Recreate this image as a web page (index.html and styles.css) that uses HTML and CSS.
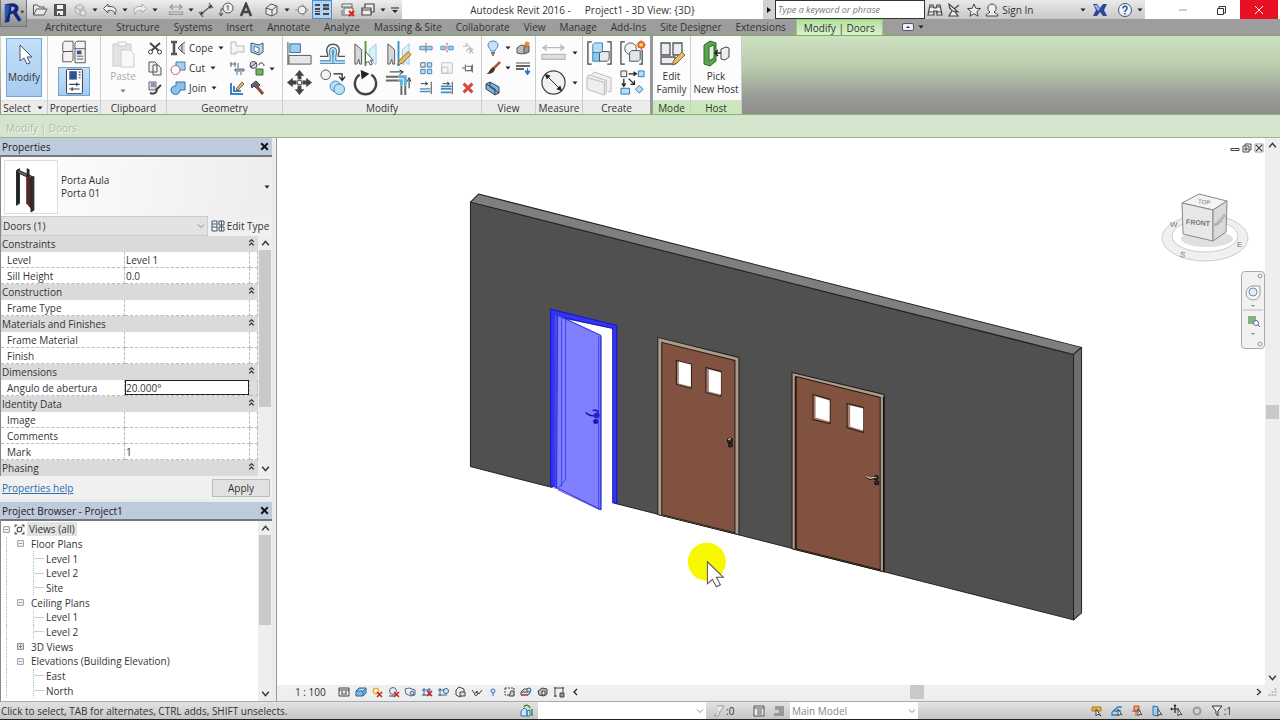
FILE: index.html
```html
<!DOCTYPE html>
<html lang="en">
<head>
<meta charset="utf-8">
<title>Autodesk Revit 2016 - Project1 - 3D View: {3D}</title>
<link rel="stylesheet" href="styles.css">
</head>
<body>
<svg class="defs" aria-hidden="true">
  <symbol id="caret" viewBox="0 0 8 8"><path d="M1.5 2.5h5L4 5.5z" fill="#222"/></symbol>
  <symbol id="up" viewBox="0 0 10 10"><path d="M2 7l3-3.500 3 3.500" fill="none" stroke="#333" stroke-width="1.300"/></symbol>
  <symbol id="down" viewBox="0 0 10 10"><path d="M2 3l3 3.500 3-3.500" fill="none" stroke="#333" stroke-width="1.300"/></symbol>
  <symbol id="x" viewBox="0 0 10 10"><path d="M2 2l6 6M8 2l-6 6" stroke="#111" stroke-width="1.800"/></symbol>
  <symbol id="fold" viewBox="0 0 8 8"><path d="M2 3.500l2-2 2 2M2 6.500l2-2 2 2" fill="none" stroke="#222"/></symbol>
  <symbol id="minus" viewBox="0 0 8 8"><path d="M1.500 1.500h5v5h-5zM2.500 4h3" fill="#fff" stroke="#888" stroke-width=".8"/></symbol>
  <symbol id="plus" viewBox="0 0 8 8"><path d="M1.500 1.500h5v5h-5zM2.500 4h3M4 2.500v3" fill="#fff" stroke="#777" stroke-width=".9"/></symbol>
  <symbol id="mirror" viewBox="0 0 28 28"><path d="M3 4l7 6v15H8l-1-5-2 5H3z" fill="#d5d8da" stroke="#555"/><path d="M25 4l-7 6v15h2l1-5 2 5h2z" fill="#d9effa" stroke="#9ccbe6"/></symbol>
</svg>

<header class="title">
  <button class="logo" aria-label="Application menu"><svg viewBox="0 0 27 27"><path d="M4 4l8-1c7 0 9 6 5 10l5 8-3 2-6-9-3 1-1 8-5 1 2-10 3-8z" fill="#142779"/><path d="M11 7c5-1 5 3 0 5z" fill="#a5b4d8"/><path d="M4 4l5 2-1 8-4 9z" fill="#2c57ad"/><path d="M21 11h4l-2 3z" fill="#333"/></svg></button>
  <div class="quick">
    <button aria-label="Open"><svg viewBox="0 0 16 16"><path d="M1.500 13V3h4l1.500 2h5v2M1.500 13l3-6H15l-3 6z" fill="#e8e8e8" stroke="#555"/></svg></button>
    <button aria-label="Save"><svg viewBox="0 0 16 16"><path d="M2.500 2.500h11v11h-11z" fill="#56595f" stroke="#44474c"/><path d="M5 3h6v4H5zM5 9h6v4H5z" fill="#f4f4f4"/><path d="M6 11h2v2H6z" fill="#555"/></svg></button>
    <button aria-label="Synchronize"><svg viewBox="0 0 16 16"><path d="M3 5l5-3 4 3v5l-5 3-4-3zM3 5l5 3 4-3M8 8v5" fill="#ddd" stroke="#aaa"/><circle cx="11" cy="11" r="3" fill="#ddd" stroke="#aaa"/></svg></button>
    <svg class="c"><use href="#caret"/></svg>
    <button aria-label="Undo"><svg viewBox="0 0 16 16"><path d="M6 2L1.500 6.500 6 11V8.500c4-.5 6 0 7 4 3-6-1-8.500-7-8z" fill="#eee" stroke="#555"/></svg></button>
    <svg class="c"><use href="#caret"/></svg>
    <button aria-label="Redo"><svg viewBox="0 0 16 16"><path d="M10 2l4.500 4.500L10 11V8.500c-4-.5-6 0-7 4-3-6 1-8.500 7-8z" fill="#eee" stroke="#aaa"/></svg></button>
    <svg class="c"><use href="#caret"/></svg><i></i>
    <button aria-label="Measure"><svg viewBox="0 0 16 16"><path d="M2 5h12M5 2.500L2 5l3 2.500M11 2.500L14 5l-3 2.500M1.500 10h13v2.500h-13z" fill="none" stroke="#999" stroke-width="1.200"/></svg></button>
    <svg class="c"><use href="#caret"/></svg>
    <button aria-label="Aligned dimension"><svg viewBox="0 0 16 16"><path d="M3 12L13 4M1 10l4 5M11 1l4 5" stroke="#555" stroke-width="1.200"/><path d="M2 13l1-4 3 3zM14 3l-1 4-3-3z" fill="#444"/></svg></button>
    <button aria-label="Tag"><svg viewBox="0 0 16 16"><circle cx="10" cy="6" r="5" fill="#eee" stroke="#555"/><path d="M8.500 4.500L10 3.500v5M5 7H3v7M1 11l2 3 2-3" fill="none" stroke="#555"/></svg></button>
    <button aria-label="Text"><svg viewBox="0 0 16 16"><path d="M3 14L8 2l5 12M5 10h6" fill="none" stroke="#444" stroke-width="2.600"/></svg></button><i></i>
    <button aria-label="Default 3D view"><svg viewBox="0 0 16 16"><path d="M2 6l5-4 6 2v7l-5 3-6-2z" fill="#e8e8e8" stroke="#555"/><path d="M2 6l6 2 5-4M8 8v6" fill="none" stroke="#555"/></svg></button>
    <svg class="c"><use href="#caret"/></svg>
    <button aria-label="Section"><svg viewBox="0 0 16 16"><path d="M8 2l6 6-6 6M1 8h3" fill="none" stroke="#999"/><circle cx="8" cy="8" r="4" fill="#eee" stroke="#777"/></svg></button>
    <button class="on" aria-label="Thin lines"><svg viewBox="0 0 16 16"><path d="M1 3h5M9 3h6M1 7h5M9 7h6M1 12h5M9 12h6" stroke="#445" stroke-width="2"/><path d="M1 9.500h5M9 5h6" stroke="#445"/></svg></button><i></i>
    <button aria-label="Close hidden windows"><svg viewBox="0 0 16 16"><path d="M2 6V2h10v4M2 5h10M4 12V6h9v7H2V8" fill="#eee" stroke="#666"/><path d="M9 9l5 5M14 9l-5 5" stroke="#d22" stroke-width="2"/></svg></button>
    <button aria-label="Switch windows"><svg viewBox="0 0 16 16"><path d="M5 6V2h9v8h-3M2 6h9v7H2zM2 8h9" fill="#eee" stroke="#444" stroke-width="1.200"/></svg></button>
    <svg class="c"><use href="#caret"/></svg>
    <svg class="c2" viewBox="0 0 12 12"><path d="M2 4h8" stroke="#222"/><path d="M3 6h6L6 9z" fill="#222"/></svg>
  </div>
  <div class="caption"><span>Autodesk Revit 2016 -</span><span>Project1 - 3D View: {3D}</span></div>
  <button class="play" aria-label="Collapse search"><svg viewBox="0 0 10 18"><path d="M3 6l4 3-4 3z" fill="#111"/></svg></button>
  <input class="search" aria-label="Search help" placeholder="Type a keyword or phrase">
  <div class="info">
    <button aria-label="Search"><svg viewBox="0 0 16 16"><path d="M3 3h3l1 3h2l1-3h3l2 10h-5V9H7v4H1z" fill="#eee" stroke="#444" stroke-width="1.200"/><path d="M1.500 10H7M9 10h6M3 5h3M10 5h3" stroke="#444"/></svg></button>
    <button aria-label="Communication"><svg viewBox="0 0 16 16"><path d="M3 2c0 6 3 8 9 8zM8 7l5-4M6 9l-3 5h9l-3-4" fill="#eee" stroke="#444" stroke-width="1.200"/></svg></button>
    <button aria-label="Favorites"><svg viewBox="0 0 16 16"><path d="M8 2l1.800 4.300 4.700.3-3.600 3 1.200 4.600L8 11.700l-4.100 2.500 1.200-4.600-3.600-3 4.700-.3z" fill="#eee" stroke="#444"/></svg></button>
    <button class="sign"><svg viewBox="0 0 16 16"><path d="M2 14c0-3 3-2 4-4-4-3-2-8 2-8s6 5 2 8c1 2 4 1 4 4z" fill="#eee" stroke="#444"/></svg>Sign In</button>
    <svg class="c"><use href="#caret"/></svg>
    <button aria-label="Exchange"><svg viewBox="0 0 16 16"><path d="M1 2h4l3 4 3-4h4l-3 6 3 6h-4l-3-4-3 4H1l3-6z" fill="#2b479a"/><path d="M2 3h3l3 4-2 2z" fill="#9fb2de"/></svg></button><i></i>
    <button aria-label="Help"><svg viewBox="0 0 16 16"><circle cx="8" cy="8" r="6.500" fill="#f1f5fc" stroke="#456"/><path d="M6 6.500c0-3 4-3 4-.5C10 8 8 8 8 10M8 11v1.500" fill="none" stroke="#27539e" stroke-width="1.600"/></svg></button>
    <svg class="c"><use href="#caret"/></svg>
  </div>
  <div class="win">
    <button aria-label="Minimize"><svg viewBox="0 0 12 12"><path d="M2 6h8" stroke="#999"/></svg></button>
    <button aria-label="Restore"><svg viewBox="0 0 12 12"><path d="M2.500 4.500h6v6h-6zM4 4V2.500h6.500V9H9" fill="none" stroke="#333"/></svg></button>
    <button class="close" aria-label="Close"><svg viewBox="0 0 12 12"><path d="M2 2l8 8M10 2l-8 8" stroke="#fff"/></svg></button>
  </div>
</header>

<nav class="tabs">
  <button>Architecture</button><button>Structure</button><button>Systems</button><button>Insert</button><button>Annotate</button><button>Analyze</button><button>Massing &amp; Site</button><button>Collaborate</button><button>View</button><button>Manage</button><button>Add-Ins</button><button>Site Designer</button><button>Extensions</button><button class="active">Modify | Doors</button>
  <button class="pill" aria-label="Minimize ribbon"><svg viewBox="0 0 12 8"><rect x=".5" y=".5" width="11" height="7" rx="1.500" fill="#eef" stroke="#556"/><path d="M4 5h4L6 3z" fill="#333"/></svg><svg class="c"><use href="#caret"/></svg></button>
</nav>

<section class="ribbon">
  <div class="group select"><div class="body"><button class="tall hot"><svg viewBox="0 0 28 28"><path d="M10 4v16l4-3 3 6 3-1-3-6h5z" fill="#fff" stroke="#456"/></svg>Modify</button></div><h2>Select <svg class="c"><use href="#caret"/></svg></h2></div>

  <div class="group props"><div class="body stack">
    <button aria-label="Type properties"><svg viewBox="0 0 32 28"><g fill="#f3f3f3" stroke="#555"><path d="M4 5l2-2h9v9l-2 2H4zM17 5l2-2h9v9H17zM4 16l2-2h9v9l-2 2H4z"/><path d="M17 11h11v15H17z"/></g><path d="M19 13h5v4h-5z" fill="#34568c"/><path d="M19 19h7M19 22h7" stroke="#555"/></svg></button>
    <button class="hot" aria-label="Properties"><svg viewBox="0 0 32 28"><rect x="8" y="1" width="17" height="26" rx="1" fill="#fff" stroke="#334"/><path d="M11 3h8v9h-8z" fill="#2d568f"/><path d="M21 4h2M21 7h2M21 10h2M11 17h11M11 22h11M19 15v4M14 20v4" stroke="#345" stroke-width="1.300"/></svg></button>
  </div><h2>Properties</h2></div>

  <div class="group clip"><div class="body">
    <button class="tall off"><svg viewBox="0 0 28 28"><path d="M4 4h18v22H4z" fill="#e3e3e3" stroke="#ccc"/><path d="M9 2h8v4H9zM12 10h9l4 4v13H12z" fill="#f8f8f8" stroke="#ccc"/></svg>Paste<svg class="c"><use href="#caret"/></svg></button>
    <div class="col">
      <button aria-label="Cut to clipboard"><svg viewBox="0 0 16 16"><path d="M3 3l9 8M13 3l-9 8" stroke="#444" stroke-width="1.800"/><circle cx="3.500" cy="12" r="2" fill="#fff" stroke="#444"/><circle cx="12.500" cy="12" r="2" fill="#fff" stroke="#444"/></svg></button>
      <button aria-label="Copy"><svg viewBox="0 0 16 16"><path d="M2 2h6l2 2v8H2zM6 5h5l3 3v7H6z" fill="#f2f2f2" stroke="#555"/></svg></button>
      <button aria-label="Match type"><svg viewBox="0 0 16 16"><path d="M2 2h7v8H2z" fill="#d8deec" stroke="#667"/><path d="M4 4h4M4 6h4" stroke="#446"/><path d="M14 5l-5 5M3 13c3 1 6 1 7-3" stroke="#444" stroke-width="2" fill="none"/></svg></button>
    </div></div><h2>Clipboard</h2></div>

  <div class="group geo"><div class="body">
    <div class="col words">
      <button><svg viewBox="0 0 16 16"><path d="M1 2h6M1 14h6M4 2v12" stroke="#555" stroke-width="2.600"/><path d="M15 2l-3 2v8l3 2M12 4L8 8l4 4" fill="#cfd8e0" stroke="#555"/></svg>Cope<svg class="c"><use href="#caret"/></svg></button>
      <button><svg viewBox="0 0 16 16"><path d="M6 2h9v8H6z" fill="#a6d1ef" stroke="#3d82b8"/><circle cx="5.500" cy="10" r="4.500" fill="#fff" stroke="#a66"/></svg>Cut<svg class="c"><use href="#caret"/></svg></button>
      <button><svg viewBox="0 0 16 16"><path d="M6 2h9v8h-5c0 6-9 6-9 0 0-3 2-4 5-4z" fill="#8cc2e8" stroke="#2c73ad"/></svg>Join<svg class="c"><use href="#caret"/></svg></button>
    </div>
    <div class="col">
      <button aria-label="Wall joins"><svg viewBox="0 0 16 16"><path d="M2 2h5v4h8v6H7v2H2z" fill="#f5f5f5" stroke="#bbb"/></svg></button>
      <button aria-label="Beam joins"><svg viewBox="0 0 16 16"><path d="M2 2v5M6 2v5M1 4h6M6 9h9v2H6zM8 12v3M12 12v3M9 3v5" fill="#bcc" stroke="#567"/></svg></button>
      <button aria-label="Paint edge"><svg viewBox="0 0 16 16"><path d="M2 3v11h12M5 6v5h7" fill="none" stroke="#3c86bd" stroke-width="2"/><path d="M7 9l6-7 2 2-6 6z" fill="#eab64a" stroke="#765"/></svg></button>
    </div>
    <div class="col">
      <button aria-label="Split face"><svg viewBox="0 0 16 16"><path d="M2 3l8 2 4-2v9l-4 3-8-3z" fill="#bcd9f0" stroke="#456"/><path d="M5 6l5 2v5l-5-2z" fill="#fff" stroke="#367bb5"/></svg></button>
      <button aria-label="Paint"><svg viewBox="0 0 16 16"><circle cx="4.500" cy="5" r="3.500" fill="#dce" stroke="#444"/><path d="M2 7l5-4" stroke="#444"/><path d="M7 9h7v6H7z" fill="#75b54a" stroke="#365"/><path d="M10 5c0-3 5-3 5 1" fill="none" stroke="#333"/></svg></button>
      <button aria-label="Demolish"><svg viewBox="0 0 16 16"><path d="M2 5l5-4 4 4-4 3-2-2-2 2z" fill="#666" stroke="#444"/><path d="M8 7l6 7" stroke="#8a4c3c" stroke-width="3"/></svg></button>
    </div>
    <svg class="c"><use href="#caret"/></svg>
  </div><h2>Geometry</h2></div>

  <div class="group modify"><div class="body">
    <div class="big4">
      <button aria-label="Align"><svg viewBox="0 0 28 28"><path d="M2 2v24" stroke="#444"/><path d="M4 4h11v9H4z" fill="#9dcdec" stroke="#2e73a5"/><path d="M3 16h23v9H3z" fill="#e5e7e8" stroke="#555"/></svg></button>
      <button aria-label="Offset"><svg viewBox="0 0 28 28"><path d="M1 17h8V15c-6-14 17-14 11 0v2h7" fill="none" stroke="#555" stroke-width="1.500"/><path d="M1 23h12v-7c-4-9 7-9 3 0v7h11" fill="none" stroke="#397fae" stroke-width="4"/><path d="M1 23h12v-7c-4-9 7-9 3 0v7h11" fill="none" stroke="#b9dff5" stroke-width="2"/></svg></button>
      <button aria-label="Mirror by axis"><svg viewBox="0 0 28 28"><use href="#mirror"/><path d="M14 1v26" stroke="#5aa02c" stroke-width="2"/><path d="M14 12v12l3-2 2 4 2-1-2-4h3z" fill="#fff" stroke="#555"/></svg></button>
      <button aria-label="Mirror by drawing"><svg viewBox="0 0 28 28"><use href="#mirror"/><path d="M14 1v26" stroke="#3b94ce" stroke-width="2"/><path d="M13 26l2-5 9-9 3 3-9 9z" fill="#eebf4e" stroke="#765"/></svg></button>
      <button aria-label="Move"><svg viewBox="0 0 28 28"><path d="M14 1l5 6h-3v4h-4V7H9zM14 27l5-6h-3v-4h-4v4H9zM1 14l6-5v3h4v4H7v3zM27 14l-6-5v3h-4v4h4v3z" fill="#444"/><path d="M12 12h4v4h-4z" fill="#fff" stroke="#555"/></svg></button>
      <button aria-label="Copy element"><svg viewBox="0 0 28 28"><circle cx="7" cy="6" r="5" fill="#f3f3f3" stroke="#555"/><path d="M15 5h9v6M21 8l3 4 3-4" fill="none" stroke="#222" stroke-width="1.300"/><circle cx="17" cy="18" r="5.500" fill="#b9dff5" stroke="#3784b8"/><circle cx="21" cy="21" r="5.500" fill="#b9dff5" stroke="#3784b8"/></svg></button>
      <button aria-label="Rotate"><svg viewBox="0 0 28 28"><path d="M8 6A11 11 0 1 0 20 6" fill="none" stroke="#444" stroke-width="2.500"/><path d="M9 1l9 4-8 6z" fill="#222"/></svg></button>
      <button aria-label="Trim"><svg viewBox="0 0 28 28"><path d="M1 8h13M1 12h13M17 17v10M21 17v10" stroke="#666" stroke-width="2"/><path d="M14 8h7v9M14 12h3v5" fill="none" stroke="#59afe0" stroke-width="3"/><path d="M5 3h13M15 1l4 2-4 3M25 20v-9M23 13l2-4 2 4" fill="none" stroke="#222"/></svg></button>
    </div>
    <div class="small9">
      <button aria-label="Split"><svg viewBox="0 0 16 16"><path d="M1 6h14v4H1z" fill="#a6d1ef" stroke="#4587b5"/><path d="M8 2v12" stroke="#c33" stroke-dasharray="3 1"/></svg></button>
      <button aria-label="Split with gap"><svg viewBox="0 0 16 16"><path d="M1 6h5v4H1zM10 6h5v4h-5z" fill="#a6d1ef" stroke="#4587b5"/><path d="M8 2v12" stroke="#c33" stroke-dasharray="3 1"/></svg></button>
      <button aria-label="Unpin"><svg viewBox="0 0 16 16"><path d="M2 6h4V3l6 6H8l-2 3M9 9l5 5M14 9l-5 5" fill="none" stroke="#bbb" stroke-width="1.300"/></svg></button>
      <button aria-label="Array"><svg viewBox="0 0 16 16"><path d="M2 2h5v5H2z" fill="#eee" stroke="#555"/><path d="M9.500 2h5v5h-5zM2 9.500h5v5H2zM9.500 9.500h5v5h-5z" fill="#b8dcf3" stroke="#2f7db4"/></svg></button>
      <button aria-label="Scale"><svg viewBox="0 0 16 16"><path d="M2 2h12v12H2zM2 7h7v7H2z" fill="#f6f6f6" stroke="#bbb"/></svg></button>
      <button aria-label="Pin"><svg viewBox="0 0 16 16"><path d="M1 8h4M5 4v8M6 6h6v5H6M13 4v9" fill="none" stroke="#666" stroke-width="1.200"/></svg></button>
      <button aria-label="Trim single"><svg viewBox="0 0 16 16"><path d="M14 1v14M2 3h8M7 1l3 2-3 2" fill="none" stroke="#333"/><path d="M1 9h12M1 12h12" stroke="#438ebf" stroke-width="1.500"/></svg></button>
      <button aria-label="Trim multiple"><svg viewBox="0 0 16 16"><path d="M14 1v14M3 3h7M8 1l3 2-3 2" fill="none" stroke="#333"/><path d="M1 6h12M1 9h12M1 13h12" stroke="#438ebf" stroke-width="2"/></svg></button>
      <button aria-label="Delete"><svg viewBox="0 0 16 16"><path d="M3 3l10 10M13 3L3 13" stroke="#d9483f" stroke-width="3.500"/></svg></button>
    </div>
  </div><h2>Modify</h2></div>

  <div class="group view"><div class="body">
    <div class="view6">
      <button aria-label="Hide"><svg viewBox="0 0 16 16"><path d="M6 11c0-2-3-3-3-6s3-4 5-4 5 1 5 4-3 4-3 6z" fill="#c7e2fa" stroke="#4d84b5"/><path d="M6 13h4M7 15h2" stroke="#555" stroke-width="1.500"/></svg></button><svg class="c"><use href="#caret"/></svg>
      <button aria-label="Displace"><svg viewBox="0 0 16 16"><path d="M2 8l4-3 5 1v6l-4 2-5-1z" fill="#bbb" stroke="#555"/><path d="M9 7l5-1v6l-5 2z" fill="#999" stroke="#555"/><circle cx="12" cy="4" r="2.500" fill="#f08a35"/></svg></button>
      <button aria-label="Override"><svg viewBox="0 0 16 16"><path d="M15 2l-7 7" stroke="#a75c34" stroke-width="2.500"/><path d="M9 7l1 2c-1 4-4 5-9 5 4-1 3-6 8-7z" fill="#4a3328"/></svg></button><svg class="c"><use href="#caret"/></svg>
      <button aria-label="Linework"><svg viewBox="0 0 16 16"><path d="M1 3h14" stroke="#555"/><path d="M1 6h14M1 9h8" stroke="#333" stroke-width="1.600"/><path d="M10 11h5l-2.500 4zM12.500 8v4" stroke="#2879c2" fill="#2879c2"/></svg></button>
      <button aria-label="Selection box"><svg viewBox="0 0 16 16"><path d="M1 4l4-2 9 5v6l-4 2-9-6z" fill="#7fb3dc" stroke="#345"/><path d="M5 2v5l9 6M1 4l9 5v6" fill="none" stroke="#345"/></svg></button>
    </div></div><h2>View</h2></div>

  <div class="group measure"><div class="body two">
    <button aria-label="Measure distance"><svg viewBox="0 0 28 28"><path d="M3 8h22M7 5L3 8l4 3M21 5l4 3-4 3M2 15h24v5H2z" fill="#ddd" stroke="#bbb" stroke-width="1.300"/></svg></button><svg class="c"><use href="#caret"/></svg>
    <button aria-label="Dimension"><svg viewBox="0 0 28 28"><circle cx="14" cy="14" r="12" fill="#f2f2f2" stroke="#444" stroke-width="1.300"/><path d="M6 6l16 16" stroke="#222"/><path d="M5 5l6 2-4 4zM23 23l-6-2 4-4z" fill="#222"/></svg></button><svg class="c"><use href="#caret"/></svg>
  </div><h2>Measure</h2></div>

  <div class="group create"><div class="body two">
    <button aria-label="Create assembly"><svg viewBox="0 0 28 28"><path d="M6 2H2v23h4M22 2h4v23h-4" fill="none" stroke="#444" stroke-width="1.300"/><path d="M7 5l2-2h8v10H7z" fill="#b5dcf4" stroke="#3784b8"/><path d="M7 13h8v9H7z" fill="#8ec5e9" stroke="#3784b8"/><path d="M14 14l2-2h8v8l-2 2h-8z" fill="#e6eaee" stroke="#456"/></svg></button>
    <button aria-label="Create group"><svg viewBox="0 0 28 28"><path d="M6 2H2v23h4M24 10v15h-3" fill="none" stroke="#444" stroke-width="1.300"/><circle cx="12" cy="9" r="6" fill="#f3f3f3" stroke="#555"/><path d="M11 13l2-2h9v9l-2 2h-9z" fill="#e1e5e8" stroke="#456"/><circle cx="23" cy="5" r="3" fill="#ffd86b" stroke="#e2662b" stroke-width="2"/><path d="M23 0v2M23 8v3M18 5h2M26 5h2" stroke="#e2662b"/></svg></button>
    <button aria-label="Create parts"><svg viewBox="0 0 28 28"><path d="M6 6l2-3 18 6v14l-3 1" fill="#f1f1f1" stroke="#bbb"/><path d="M1 9l2-3 18 6v13l-2 2-18-6z" fill="#eee" stroke="#bbb"/><path d="M1 9l18 5v13M19 14l2-2" fill="none" stroke="#bbb"/></svg></button>
    <button aria-label="Create similar"><svg viewBox="0 0 28 28"><path d="M2 2h6v6H2z" fill="#eee" stroke="#444"/><path d="M20 2h6v6h-6zM2 20h9v6H2zM21 17l4 4-4 4-4-4z" fill="#b5dcf4" stroke="#2e79ae"/><path d="M10 5h8M15 3l3 2-3 2M5 10v8M3 15l2 3 2-3M10 10l6 6M16 12v4h-4" fill="none" stroke="#222" stroke-width="1.300"/></svg></button>
  </div><h2>Create</h2></div>

  <div class="group mode green"><div class="body"><button class="tall"><svg viewBox="0 0 28 28"><path d="M3 3h9v12H3zM15 3h9v12h-9zM3 17h14v7H3z" fill="#e9ecf0" stroke="#555" stroke-width="1.300"/><path d="M14 25l2-5 8-8 3 3-8 8z" fill="#eebf4e" stroke="#765"/></svg>Edit<br>Family</button></div><h2>Mode</h2></div>
  <div class="group host green"><div class="body"><button class="tall"><svg viewBox="0 0 28 28"><path d="M2 5l6-4 6 2v18l-6 5-6-2z" fill="#5ba34e" stroke="#2f6b2b"/><path d="M7 7l5-2v13l-5 3z" fill="#e0f0dc" stroke="#2f6b2b"/><path d="M13 13h6M16 10l-3 3 3 3" fill="none" stroke="#222" stroke-width="1.500"/><path d="M19 9l5-2 3 1v9l-4 3-4-1z" fill="#eee" stroke="#444"/></svg>Pick<br>New Host</button></div><h2>Host</h2></div>
</section>

<div class="options">Modify | Doors</div>

<main>
  <aside>
    <section class="panel properties">
      <h3>Properties<button aria-label="Close properties"><svg><use href="#x"/></svg></button></h3>
      <button class="type">
        <svg class="thumb" viewBox="0 0 54 54"><path d="M12 10l3-2v36l-3 2z" fill="#23261f" stroke="#23261f"/><path d="M13 9l15 7v3L13 12z" fill="#6c6a58" stroke="#222"/><path d="M22 14l7 5v33l-7-8z" fill="#55292a"/><path d="M23 8l2 1v7l-2-1zM27 17l3-1v35l-3 2z" fill="#34332a" stroke="#222"/></svg>
        <span>Porta Aula<br>Porta 01</span><svg class="c"><use href="#caret"/></svg>
      </button>
      <div class="filter"><select aria-label="Element filter"><option>Doors (1)</option></select><button><svg viewBox="0 0 14 14"><path d="M1 2h5v10H1zM8 2h5v4H8zM8 8h5v4H8zM1 5h5M1 8h5M10.500 2v10" fill="#f3f5fa" stroke="#456"/></svg>Edit Type</button></div>
      <div class="sheet">
        <table>
          <tr class="cat"><th colspan="3">Constraints<svg><use href="#fold"/></svg></th></tr>
          <tr><td>Level</td><td>Level 1</td><td></td></tr>
          <tr><td>Sill Height</td><td>0.0</td><td></td></tr>
          <tr class="cat"><th colspan="3">Construction<svg><use href="#fold"/></svg></th></tr>
          <tr><td>Frame Type</td><td></td><td></td></tr>
          <tr class="cat"><th colspan="3">Materials and Finishes<svg><use href="#fold"/></svg></th></tr>
          <tr><td>Frame Material</td><td></td><td></td></tr>
          <tr><td>Finish</td><td></td><td></td></tr>
          <tr class="cat"><th colspan="3">Dimensions<svg><use href="#fold"/></svg></th></tr>
          <tr class="edit"><td><label for="angle">Angulo de abertura</label></td><td><input id="angle" value="20.000°"></td><td></td></tr>
          <tr class="cat"><th colspan="3">Identity Data<svg><use href="#fold"/></svg></th></tr>
          <tr><td>Image</td><td></td><td></td></tr>
          <tr><td>Comments</td><td></td><td></td></tr>
          <tr><td>Mark</td><td>1</td><td></td></tr>
          <tr class="cat"><th colspan="3">Phasing<svg><use href="#fold"/></svg></th></tr>
        </table>
        <div class="scroll"><svg><use href="#up"/></svg><b class="t1"></b><svg><use href="#down"/></svg></div>
      </div>
      <div class="foot"><a href="#help">Properties help</a><button>Apply</button></div>
    </section>
    <section class="panel browser">
      <h3>Project Browser - Project1<button aria-label="Close browser"><svg><use href="#x"/></svg></button></h3>
      <div class="treebox">
        <ul class="tree">
          <li class="l0"><svg><use href="#minus"/></svg><svg class="vw" viewBox="0 0 10 10"><path d="M1 3V1h2M7 1h2v2M9 7v2H7M3 9H1V7" fill="none" stroke="#555"/><path d="M3 4l1-1h3v3L6 7H3z" fill="none" stroke="#444"/></svg><span>Views (all)</span></li>
          <li class="l1"><svg><use href="#minus"/></svg>Floor Plans</li>
          <li class="l2">Level 1</li><li class="l2">Level 2</li><li class="l2">Site</li>
          <li class="l1"><svg><use href="#minus"/></svg>Ceiling Plans</li>
          <li class="l2">Level 1</li><li class="l2">Level 2</li>
          <li class="l1"><svg><use href="#plus"/></svg>3D Views</li>
          <li class="l1"><svg><use href="#minus"/></svg>Elevations (Building Elevation)</li>
          <li class="l2">East</li><li class="l2">North</li>
        </ul>
        <div class="scroll"><svg><use href="#up"/></svg><b class="t2"></b><svg><use href="#down"/></svg></div>
      </div>
    </section>
  </aside>

  <section class="viewport">
    <div class="canvas">
      <svg class="model" viewBox="277 139 988 546" preserveAspectRatio="xMidYMid slice">
        <g stroke="#222" stroke-linejoin="round">
          <path d="M471 203L1073 355V620L471 467z" fill="#505050"/>
          <path d="M471 203l8-8 602 153-8 7z" fill="#7f7f7f"/>
          <path d="M1073 355l8-7v265l-8 7z" fill="#6f6f6f"/>
        </g>
        <path d="M557 318l58 12v174l-58-15z" fill="#fff"/>
        <path d="M553 487l60 14v8l-60-15z" fill="#fff"/>
        <path d="M551 310l66 16v178l-4-1V329l-51-11v171l-11-3z" fill="#3434ee" stroke="#1212d8"/>
        <path d="M555 316l14 5v166l-14 2z" fill="#4a4af0"/>
        <path d="M558 316l43 20v174l-44-22z" fill="#8080ff" stroke="#3030dc"/>
        <path d="M599 337v172M601.500 337v173M562 318v169M566 320v160l-7 8M558 490l42 20" fill="none" stroke="#3535db" stroke-width=".8"/>
        <path d="M586 413c3 3 5 4 9 3M593 411c3-1 5 0 6 2" fill="none" stroke="#1515b8" stroke-width="1.600"/><circle cx="597" cy="416" r="3" fill="#2222c8"/><circle cx="596" cy="422" r="2.500" fill="#1515b8"/>
        <g stroke="#241b17">
          <path d="M658 338l81 20v177l-81-20z" fill="#a99c8b"/>
          <path d="M662 343l73 18v172l-73-18z" fill="#80523f"/>
          <path d="M676.500 361l15 4v24l-15-4zM706 368l15 4v25l-15-4z" fill="#a97f74"/>
          <path d="M792 373l92 22v177l-92-23z" fill="#a99c8b"/>
          <path d="M796 377l84 21v172l-84-21z" fill="#80523f"/>
          <path d="M813 395l17 5v24l-17-4zM847 404l16 4v25l-16-5z" fill="#a97f74"/>
        </g>
        <path d="M679 362l12 3v22l-12-3zM709 370l12 3v22l-12-3zM815.500 397l14 4v21l-14-4zM850 406l13 3v22l-13-4z" fill="#fff"/>
        <path d="M795.500 377v172M883.500 397v174" stroke="#211" stroke-width="1.500"/>
        <g fill="#333" stroke="#111"><circle cx="730" cy="441" r="2.500"/><circle cx="730.500" cy="445.500" r="2"/><circle cx="876" cy="478" r="2"/><circle cx="876.500" cy="483" r="2"/></g>
        <path d="M866 477l4 1.500 6-1M728 440l3-1" stroke="#ddc" fill="none"/><path d="M866 478l4 2 5-1" stroke="#111" fill="none" stroke-width=".8"/>
        <circle cx="707" cy="562" r="19" fill="#f7f700"/>
        <path d="M707.500 562v22l5-4.500 4 7.500 4-2-4-7.500h7z" fill="#fff" stroke="#555"/>
      </svg>
      <div class="mdi">
        <button aria-label="Minimize view"><svg viewBox="0 0 10 10"><path d="M1 5.500h8v2H1z" fill="#fff" stroke="#444"/></svg></button>
        <button aria-label="Restore view"><svg viewBox="0 0 10 10"><path d="M1 3h6v6H1zM3 3V1h6v6H7M3 5h2v2H3z" fill="none" stroke="#444"/></svg></button>
        <button aria-label="Close view"><svg viewBox="0 0 10 10"><path d="M1 1h8v8H1z" fill="none" stroke="#999"/><path d="M2 2l6 6M8 2L2 8" stroke="#444" stroke-width="1.300"/></svg></button>
      </div>
      <svg class="cube" viewBox="0 0 90 72">
        <ellipse cx="44" cy="45" rx="43" ry="23" fill="#f0f0f0" stroke="#ccc"/><ellipse cx="44" cy="43" rx="33" ry="16" fill="#fff" stroke="#ccc"/>
        <ellipse cx="46" cy="46" rx="26" ry="8" fill="#e0e0e0"/>
        <path d="M21 10L38 1l28 7-14 9z" fill="#f3f3f3" stroke="#888"/><path d="M21 10l31 7v31l-30-7z" fill="#e8e8e8" stroke="#888"/><path d="M52 17l14-9-1 31-13 9z" fill="#dadada" stroke="#888"/>
        <g font-family="Liberation Sans, sans-serif" fill="#777"><text x="25" y="32" font-size="7" font-weight="700" transform="rotate(5 36 30)">FRONT</text><text x="37" y="11" font-size="6" transform="rotate(8 43 9)">TOP</text><text x="0" y="0" font-size="5" transform="translate(55 34) rotate(-45)">RIGHT</text><text x="19" y="64" font-size="8" transform="rotate(12 20 62)">S</text><text x="76" y="54" font-size="8">E</text><text x="9" y="34" font-size="8">W</text></g>
      </svg>
      <div class="nav">
        <svg viewBox="0 0 22 76"><g fill="none" stroke="#999"><circle cx="18" cy="4" r="2"/><circle cx="18" cy="72" r="2"/><path d="M18 20V14h-7a7 7 0 1 0 7 6z" fill="#f6f8fb"/><circle cx="11" cy="20" r="4" stroke="#7589a5" fill="#e4ecf8"/><path d="M1 38h20" stroke="#bbb"/></g><path d="M6 44h8v8H6z" fill="#84b184"/><circle cx="14" cy="51" r="2.500" fill="#fff" stroke="#668"/><path d="M16 53l2 2" stroke="#668"/><path d="M9 33h4l-2 2zM9 61h4l-2 2z" fill="#888"/></svg>
      </div>
    </div>
    <div class="vscroll"><svg><use href="#up"/></svg><b></b><svg><use href="#down"/></svg></div>
    <div class="viewbar">
      <span>1 : 100</span>
      <div class="icons">
        <svg viewBox="0 0 12 12"><path d="M1 2h10v8H1zM1 4h10M3 6h2M7 6h2M3 8h6" fill="#eee" stroke="#444"/></svg>
        <svg viewBox="0 0 12 12"><path d="M1 5l3-3h7v5L8 10H1zM1 5h7l3-3M8 5v5" fill="#7fb8e4" stroke="#25679c"/></svg>
        <svg viewBox="0 0 12 12"><circle cx="5" cy="5" r="3" fill="#ffe9a0" stroke="#d29a20"/><path d="M6 6l5 5M11 6l-5 5" stroke="#c22" stroke-width="1.600"/></svg>
        <svg viewBox="0 0 12 12"><circle cx="5" cy="5" r="3.500" fill="#e5ebf4" stroke="#568"/><path d="M1 10h6" stroke="#444"/><path d="M6 6l5 5M11 6l-5 5" stroke="#c22" stroke-width="1.600"/></svg>
        <svg viewBox="0 0 12 12"><path d="M1 3l4-1 6 2v5l-4 1-5-2z" fill="#eef3f8" stroke="#568"/><circle cx="8" cy="7" r="2" fill="#cce" stroke="#568"/></svg>
        <svg viewBox="0 0 12 12"><path d="M1 9h9M3 2v8M1 4h9M8 2v6" stroke="#2c659b"/><path d="M6 5l5 5M11 5l-5 5" stroke="#c22" stroke-width="1.600"/></svg>
        <svg viewBox="0 0 12 12"><path d="M1 9h9M3 2v8M1 4h7" stroke="#2c659b"/><circle cx="9" cy="5" r="2.500" fill="#d7eafc" stroke="#368"/></svg>
        <svg viewBox="0 0 12 12"><path d="M2 4l3-3 5 2v5l-4 3-4-2z" fill="#eee" stroke="#444"/><path d="M6 10V6h5v4z" fill="#ddd" stroke="#444"/></svg>
        <svg viewBox="0 0 12 12"><path d="M1 4l3 4 2-3 2 3 3-4" fill="none" stroke="#444"/><circle cx="5" cy="8" r="1.500" fill="#fff" stroke="#444"/></svg>
        <svg viewBox="0 0 12 12"><circle cx="6" cy="5" r="2" fill="#cfe6ff" stroke="#2879c2"/><path d="M6 7v3" stroke="#2879c2"/></svg>
        <svg viewBox="0 0 12 12"><path d="M1 2h9v7H1z" fill="#eee" stroke="#444" stroke-dasharray="2 1"/><path d="M5 10l2-5h3v5z" fill="#ccc" stroke="#444"/></svg>
        <svg viewBox="0 0 12 12"><path d="M1 6l3-3h6v4L8 9H1zM1 6h7" fill="#ddd" stroke="#444"/><path d="M1 9h7" stroke="#b33"/><circle cx="9" cy="4" r="2" fill="#bdf" stroke="#368"/></svg>
        <svg viewBox="0 0 12 12"><path d="M1 5l4-3 5 1v5l-3 2-5-1z" fill="#bbb" stroke="#444"/><path d="M5 5h3v4H5z" fill="#eee" stroke="#444"/></svg>
        <svg viewBox="0 0 12 12"><path d="M1 2h10M2 1v10M10 1v6M1 10h3" stroke="#444"/><path d="M7 7h4v4H7z" fill="#999" stroke="#444"/></svg>
        <svg viewBox="0 0 12 12"><path d="M7 3L4 6l3 3" fill="none" stroke="#222" stroke-width="1.300"/></svg>
      </div>
      <div class="hscroll"><b></b><svg viewBox="0 0 10 10"><path d="M3 2l3.500 3L3 8" fill="none" stroke="#333" stroke-width="1.300"/></svg></div>
    </div>
    <svg class="grip" viewBox="0 0 14 14"><path d="M9 3h2v2H9zM6 6h2v2H6zM9 6h2v2H9zM3 9h2v2H3zM6 9h2v2H6zM9 9h2v2H9z" fill="#bbb"/></svg>
  </section>
</main>

<footer>
  <p>Click to select, TAB for alternates, CTRL adds, SHIFT unselects.</p>
  <button aria-label="Worksets"><svg viewBox="0 0 14 14"><path d="M1 7l3-3 3 2v6H1zM7 7l3-1v6H7z" fill="#cde7f8" stroke="#2c73ad"/><path d="M4 3c1-3 5-2 6 1M12 5v7" fill="none" stroke="#3b923b" stroke-width="1.500"/></svg></button>
  <select class="s1" aria-label="Active workset"><option></option></select>
  <div class="cnt"><svg viewBox="0 0 14 14"><path d="M5 2h7L8 8M8 8l-2 4H2l3-3" fill="#eee" stroke="#999"/></svg>:0</div>
  <button aria-label="Design options"><svg viewBox="0 0 14 14"><path d="M2 2h10v10H2zM2 4h10M5 6h5M5 8h5M5 10h5" fill="#eee" stroke="#555"/></svg></button>
  <button class="dim" aria-label="Exclude options"><svg viewBox="0 0 14 14"><path d="M3 2h9v10H2V9h5V6H3z" fill="#999"/></svg></button>
  <select class="s2" aria-label="Design option"><option>Main Model</option></select>
  <div class="sel">
    <button aria-label="Select links"><svg viewBox="0 0 14 14"><path d="M2 3h9v4H2z" fill="#e8b53a" stroke="#a7791a"/><path d="M6 5v7l2-2 3 2z" fill="#fff" stroke="#444"/></svg></button>
    <button aria-label="Select underlay"><svg viewBox="0 0 14 14"><path d="M2 8l6-5h4M2 8v3h6M4 7h7" fill="none" stroke="#2d83bf" stroke-width="1.300"/><path d="M8 5v7l2-2 2 1z" fill="#fff" stroke="#444"/></svg></button>
    <button aria-label="Select pinned"><svg viewBox="0 0 14 14"><path d="M4 2h5v5H4zM2 7h9M6 7v5" fill="#f0a26a" stroke="#b7502c"/><path d="M8 5v7l2-2 2 1z" fill="#fff" stroke="#444"/></svg></button>
    <button aria-label="Select by face"><svg viewBox="0 0 14 14"><path d="M3 2l5 1v9l-5-1z" fill="#9ccdf1" stroke="#2d73ad"/><path d="M8 5v7l2-2 2 1z" fill="#fff" stroke="#444"/></svg></button>
    <button aria-label="Drag elements"><svg viewBox="0 0 14 14"><path d="M5 1v8M1 5h8M4 2l1-1 1 1M2 4L1 5l1 1" fill="none" stroke="#222" stroke-width="1.200"/><path d="M8 5v7l2-2 2 1z" fill="#fff" stroke="#444"/></svg></button>
    <button aria-label="Background processes"><svg viewBox="0 0 14 14"><circle cx="7" cy="7" r="3.500" fill="none" stroke="#999" stroke-width="2"/></svg></button>
    <button class="flt" aria-label="Filter"><svg viewBox="0 0 14 14"><path d="M2 2h10L8 7v5L6 10V7z" fill="#eee" stroke="#333"/></svg>:1</button>
  </div>
</footer>
</body>
</html>
```

FILE: styles.css
```css
* { box-sizing: border-box; }
body {
  margin: 0; height: 100vh; overflow: hidden;
  display: grid; grid-template-rows: 19px 17px 79px 23px minmax(0, 1fr) 19px;
  font: 10px/14px "Open Sans", "Noto Sans", sans-serif; color: #333; background: #d5e4cd;
}
button, input, select { font: inherit; color: inherit; margin: 0; padding: 0; border: 0; background: none; border-radius: 0; }
button { display: flex; align-items: center; justify-content: center; white-space: nowrap; }
svg { display: block; flex: none; width: 16px; height: 16px; }
h2, h3, p, ul { margin: 0; padding: 0; font-size: inherit; font-weight: 400; }
select {
  appearance: none;
  background: url("data:image/svg+xml,%3Csvg xmlns='http://www.w3.org/2000/svg' viewBox='0 0 10 10'%3E%3Cpath d='M2 3.500l3 3 3-3' fill='none' stroke='%23888'/%3E%3C/svg%3E") no-repeat right 1px center / 10px 10px;
}
.defs { position: absolute; width: 0; height: 0; }
svg.c { width: 10px; height: 8px; }

.title { position: relative; display: flex; background: #fff; }
.logo { position: absolute; left: 0; top: 0; z-index: 2; background: linear-gradient(#ccc, #8f8f8f); border: 1px solid #777; border-top: 0; }
.logo svg { width: 25px; height: 26px; }
.quick { display: flex; align-items: center; padding-left: 30px; background: linear-gradient(#eee, #c4c4c4); }
.quick button { width: 20px; height: 19px; }
.quick .on { background: #b5d3f1; border: 1px solid #468cd2; }
.quick i, .info i { width: 6px; }
.c2 { width: 14px; height: 12px; }
.caption { flex: 1; display: flex; justify-content: center; align-items: center; gap: 14px; white-space: nowrap; }
.play { width: 12px; background: #d2d2d2; }
.play svg { width: 10px; height: 18px; }
.search { width: 150px; border: 1px solid #333; background: #fff; padding-left: 2px; font-style: italic; font-size: 9px; }
.search::placeholder { color: #777; }
.info { display: flex; align-items: center; width: 220px; background: linear-gradient(#eaeaea, #c8c8c8); }
.info button { width: 20px; }
.info .sign { width: 98px; justify-content: flex-start; gap: 2px; padding-left: 1px; }
.info .sign + .c { margin: 0 2px 0 0; }
.win { display: flex; padding: 0 2px 0 19px; }
.win button { width: 38px; }
.win svg { width: 12px; height: 12px; }
.win .close { background: #e81123; }

.tabs { display: flex; background: #9d9d9d; padding-left: 38px; border-bottom: 1px solid #83a85f; }
.tabs button { padding: 0 7px; color: #333; }
.tabs .active { margin-left: 3px; background: linear-gradient(#b5dfa0, #d8f2cc); border: 1px solid #8ed46d; border-bottom: 0; }
.tabs .pill { margin-left: 12px; gap: 2px; }
.pill svg:first-child { width: 12px; height: 8px; }

.ribbon { display: flex; padding-left: 1px; background: linear-gradient(#cde2c2, #b9cbae 40%, #9b9f97 75%, #8f8d8f); border-bottom: 1px solid #83b868; }
.group { display: flex; flex-direction: column; background: #fcfcfc; border-right: 1px solid #ccc; }
.group .body { flex: 1; display: flex; padding-top: 2px; min-height: 0; }
.group h2 { height: 14px; display: flex; align-items: center; justify-content: center; gap: 4px; white-space: nowrap; background: #ececec; border-top: 1px solid #ddd; }
.group .c { align-self: center; }
.green h2 { background: #cbe8bc; }
.tall { flex: 1; flex-direction: column; justify-content: flex-start; line-height: 13px; padding-top: 1px; text-align: center; white-space: normal; }
.tall svg:first-child { width: 28px; height: 30px; margin-bottom: 1px; }
.hot { background: linear-gradient(#c4dff7, #a7ccf0); border: 1px solid #6ea7dc; }
.off { color: #aaa; }
.select { width: 47px; }
.select .body { padding: 2px 5px 3px; }
.props { width: 53px; }
.stack { flex-direction: column; align-items: center; gap: 2px; }
.stack svg { width: 30px; height: 27px; }
.clip { width: 66px; }
.clip .tall { flex: 0 0 44px; }
.clip .tall .c { margin-top: 4px; opacity: .6; }
.col { display: flex; flex-direction: column; width: 20px; }
.col button { height: 20px; width: 20px; }
.geo { width: 116px; }
.words { width: 60px; }
.words button { width: 60px; gap: 3px; padding-left: 3px; justify-content: flex-start; }
.modify { width: 199px; }
.big4 { display: grid; grid-template-columns: repeat(4, 33px); grid-template-rows: 30px 29px; place-items: center; }
.big4 svg, .two svg:not(.c) { width: 27px; height: 27px; }
.small9 { display: grid; grid-template-columns: repeat(3, 21px); grid-template-rows: repeat(3, 20px); place-items: center; }
.small9 svg { width: 14px; height: 14px; }
.view { width: 54px; }
.view6 { display: grid; grid-template-columns: 22px 8px 22px; grid-template-rows: repeat(3, 20px); place-items: center; }
.group .two { display: grid; grid-template-rows: 30px 29px; place-items: center; }
.measure { width: 47px; }
.measure .two { grid-template-columns: 34px 10px; }
.create { width: 70px; border-right: 3px solid #999; }
.create .two { grid-template-columns: 33px 32px; }
.mode { width: 38px; }
.host { width: 51px; }
.host .tall { white-space: nowrap; }

.options { background: #d5e4cd; border-bottom: 1px solid #9db58e; padding: 6px; line-height: 14px; color: #aebaa7; text-shadow: 1px 1px #f4faf1; }

main { display: grid; grid-template-columns: 272px minmax(0, 1fr); column-gap: 4px; background: #e9edf0; min-height: 0; }
aside { display: flex; flex-direction: column; gap: 3px; min-height: 0; }
.panel { display: flex; flex-direction: column; }
.panel h3 { height: 17px; display: flex; align-items: center; justify-content: space-between; padding: 0 2px; background: #bdcbdc; color: #222; }
.panel h3 svg { width: 11px; height: 11px; }
.type { height: 61px; justify-content: flex-start; gap: 3px; text-align: left; padding: 1px 0 1px 3px; background: linear-gradient(100deg, #fff, #ededed); border-top: 2px solid #777; border-left: 1px solid #888; line-height: 13px; }
.type .thumb { width: 54px; height: 54px; background: #fff; border: 1px solid #ddd; }
.type .c { margin-left: auto; }
.filter { display: flex; height: 20px; background: #f0f0f0; border-left: 1px solid #888; }
.filter select { width: 207px; background-color: #e2e2e2; border: 1px solid #ccc; padding-left: 1px; }
.filter button { flex: 1; gap: 2px; }
.filter svg { width: 14px; height: 14px; }
.sheet { display: flex; }
table { flex: 1; border-collapse: separate; border-spacing: 0; table-layout: fixed; background: #fff; border-left: 1px solid #888; }
td, th { height: 16px; padding: 0; line-height: 14px; text-align: left; font-weight: 400; overflow: hidden; white-space: nowrap; }
th { background: #dadada; padding-left: 1px; }
th svg { float: right; width: 9px; height: 11px; margin-right: 2px; }
td { border-bottom: 1px dashed #bbb; border-right: 1px dashed #bbb; padding-left: 1px; }
td:first-child { width: 124px; padding-left: 6px; }
td:last-child { width: 8px; }
.edit td:last-child { background: #ddd; }
.edit td:nth-child(2) { padding: 0; }
#angle { width: 100%; height: 15px; display: block; border: 1px solid #222; background: #fff; }
.scroll { width: 14px; display: flex; flex-direction: column; align-items: center; background: #eee; }
.scroll svg, .vscroll svg { width: 11px; height: 14px; }
.scroll b { width: 12px; background: #c9c9c9; }
.t1 { height: 157px; margin-bottom: auto; }
.t2 { height: 90px; margin-bottom: auto; }
.foot { display: flex; justify-content: space-between; align-items: center; height: 23px; padding: 0 2px; background: #f0f0f0; }
.foot a { color: #2a6fb0; }
.foot button { width: 58px; height: 18px; background: #e1e1e1; border: 1px solid #bbb; }
.browser { flex: 1; min-height: 0; }
.treebox { flex: 1; display: flex; min-height: 0; border-top: 2px solid #777; border-left: 1px solid #888; background: #fff; }
.tree { flex: 1; list-style: none; display: grid; grid-auto-rows: 1fr; padding: 1px 0 3px; }
.tree li { display: flex; align-items: center; line-height: 14px; min-height: 0; }
.tree svg { width: 9px; height: 9px; }
.tree .vw { width: 11px; height: 11px; margin: 0 2px 0 3px; }
.l0 { padding-left: 1px; }
.l0 span { background: #e2e2e2; padding: 0 2px; }
.l1 { margin-left: 5px; padding-left: 9px; gap: 6px; border-left: 1px dotted #bbb; }
.l2 { margin-left: 5px; border-left: 1px dotted #bbb; }
.l2::before { content: ""; width: 10px; align-self: stretch; margin: 0 2px 0 26px; border-left: 1px dotted #bbb; background: linear-gradient(#ccc, #ccc) no-repeat center / 100% 1px; }

.viewport { display: grid; grid-template-columns: minmax(0, 1fr) 15px; grid-template-rows: minmax(0, 1fr) 14px; padding-bottom: 2px; border-left: 1px solid #999; min-height: 0; }
.canvas { position: relative; background: #fff; overflow: hidden; min-height: 0; }
.model { width: 100%; height: 100%; }
.mdi { position: absolute; top: 5px; right: 1px; display: flex; gap: 2px; }
.mdi svg { width: 10px; height: 10px; }
.cube { position: absolute; top: 55px; right: 14px; width: 90px; height: 72px; }
.nav { position: absolute; top: 133px; right: 0; background: #f1f1f1; border: 1px solid #aaa; border-radius: 4px; }
.nav svg { width: 22px; height: 76px; }
.vscroll { display: flex; flex-direction: column; align-items: center; justify-content: space-between; background: #eee; }
.vscroll b { width: 13px; height: 14px; background: #c9c9c9; }
.viewbar { display: flex; align-items: center; background: #efefef; padding-left: 18px; }
.viewbar span { width: 43px; }
.icons { display: flex; justify-content: space-between; width: 244px; }
.icons svg { width: 12px; height: 12px; }
.hscroll { flex: 1; display: flex; align-items: center; justify-content: flex-end; }
.hscroll b { width: 14px; height: 14px; background: #c9c9c9; margin-right: auto; margin-left: 48%; }
.hscroll svg { width: 12px; height: 10px; }
.grip { width: 15px; height: 14px; background: #eee; }

footer { display: flex; align-items: center; gap: 2px; background: linear-gradient(#e3e3e3, #c6c6c6); border-top: 1px solid #aaa; border-bottom: 1px solid #222; }
footer p { width: 516px; padding-left: 1px; }
footer svg { width: 14px; height: 14px; }
footer select { height: 17px; background-color: #fff; color: #888; }
.s1 { width: 168px; }
.cnt { display: flex; width: 40px; padding-left: 4px; align-items: center; }
footer > button { width: 18px; }
.s2 { width: 128px; padding-left: 2px; }
.sel { margin-left: auto; margin-right: 48px; display: flex; gap: 6px; }
```
